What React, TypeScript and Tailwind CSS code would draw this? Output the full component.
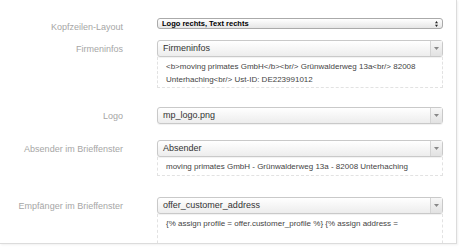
import React from 'react';

const font = { fontFamily: '"Liberation Sans", Arial, sans-serif' };

const Label: React.FC<{ children: React.ReactNode }> = ({ children }) => (
  <div className="w-[123px] shrink-0 pt-[4px] text-right text-[9px] leading-[11px] text-[#a6a6a6]">{children}</div>
);

const Select: React.FC<{ value: string }> = ({ value }) => (
  <div className="flex h-[17px] w-[286px] items-stretch rounded-[3px] border border-[#c9c9c9] bg-gradient-to-b from-white to-[#ededed] shadow-[0_1px_1px_rgba(0,0,0,0.06)]">
    <div className="flex flex-1 items-center pl-[5px] text-[9px] text-[#333]">{value}</div>
    <div className="flex w-[12px] items-center justify-center border-l border-[#d4d4d4] bg-gradient-to-b from-[#f7f7f7] to-[#e2e2e2]">
      <svg width="5" height="3" viewBox="0 0 5 3"><path d="M0 0h5L2.5 3z" fill="#888" /></svg>
    </div>
  </div>
);

const Preview: React.FC<{ lines: string[]; h: string }> = ({ lines, h }) => (
  <div className={`w-[286px] ${h} border-x border-b border-dashed border-[#e2e2e2] px-[8px] pt-[4px] text-[8px] leading-[12.5px] text-[#444]`}>
    {lines.map((l) => (
      <div key={l} className="whitespace-nowrap">{l}</div>
    ))}
  </div>
);

export default function App() {
  return (
    <div className="h-[248px] w-[459px] overflow-hidden bg-white" style={font}>
      <div className="h-[244px] w-[457px] overflow-hidden border-r border-b border-[#dcdcdc] bg-white pt-[18px] shadow-[1px_1px_2px_rgba(0,0,0,0.06)]">
        {/* Kopfzeilen-Layout */}
        <div className="flex h-[11px] gap-[34px]">
          <Label>Kopfzeilen-Layout</Label>
          <div className="flex h-[11px] w-[286px] items-center justify-between rounded-[3px] border border-[#aaa] bg-gradient-to-b from-white to-[#e6e6e6] pl-[4px] pr-[4px]">
            <span className="text-[7.5px] font-bold leading-none text-black">Logo rechts, Text rechts</span>
            <svg width="3" height="6" viewBox="0 0 3 6"><path d="M0 2.2 1.5 0 3 2.2zM0 3.8 1.5 6 3 3.8z" fill="#222" /></svg>
          </div>
        </div>

        {/* Firmeninfos */}
        <div className="mt-[11px] flex gap-[34px]">
          <Label>Firmeninfos</Label>
          <div>
            <Select value="Firmeninfos" />
            <Preview
              h="h-[31px]"
              lines={[
                '<b>moving primates GmbH</b><br/> Grünwalderweg 13a<br/> 82008',
                'Unterhaching<br/> Ust-ID: DE223991012',
              ]}
            />
          </div>
        </div>

        {/* Logo */}
        <div className="mt-[19px] flex gap-[34px]">
          <Label>Logo</Label>
          <Select value="mp_logo.png" />
        </div>

        {/* Absender */}
        <div className="mt-[16px] flex gap-[34px]">
          <Label>Absender im Brieffenster</Label>
          <div>
            <Select value="Absender" />
            <Preview h="h-[19px]" lines={['moving primates GmbH - Grünwalderweg 13a - 82008 Unterhaching']} />
          </div>
        </div>

        {/* Empfänger */}
        <div className="mt-[21px] flex gap-[34px]">
          <Label>Empfänger im Brieffenster</Label>
          <div>
            <Select value="offer_customer_address" />
            <Preview h="h-[40px]" lines={['{% assign profile = offer.customer_profile %} {% assign address =']} />
          </div>
        </div>
      </div>
    </div>
  );
}
